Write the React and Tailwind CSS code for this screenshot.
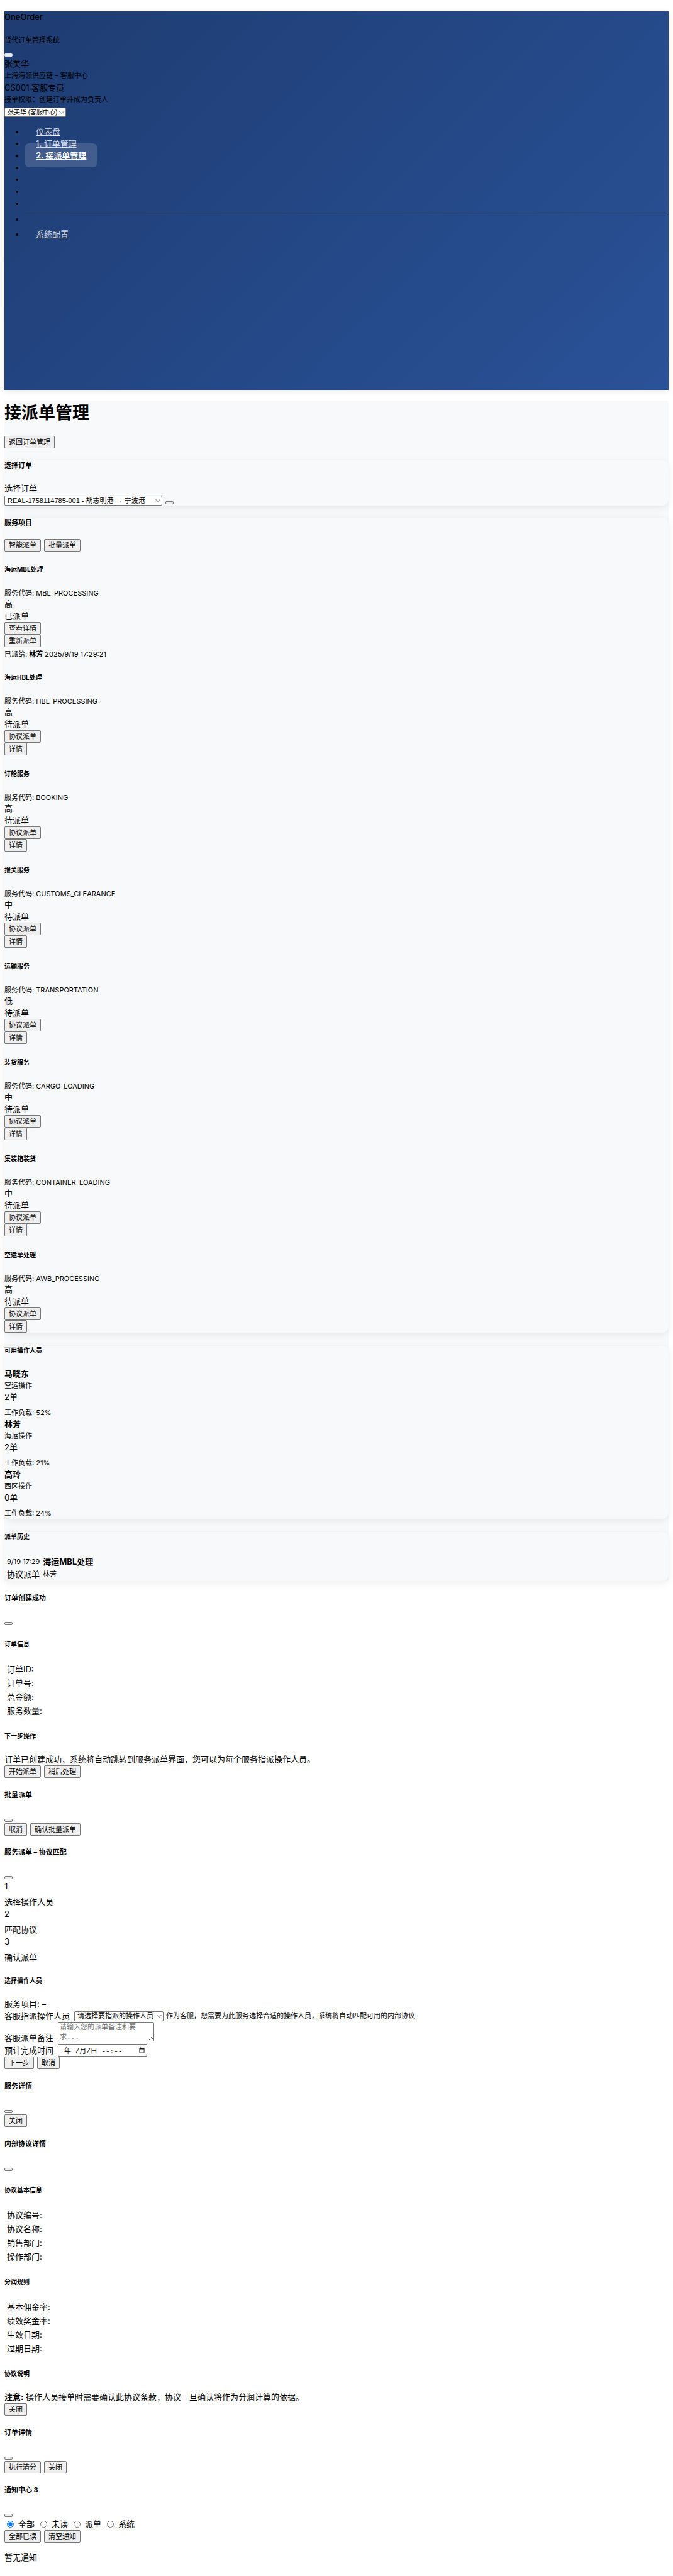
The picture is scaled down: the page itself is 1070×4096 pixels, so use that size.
import React from "react";

const buttonClass =
  "inline-flex h-[20px] items-center rounded-[2px] border border-[#767676] bg-[#efefef] px-[6px] text-[11px] leading-none text-black";

function Btn({ children }) {
  return (
    <button type="button" className={buttonClass}>
      {children}
    </button>
  );
}

function IconButton({ label, className = "" }) {
  return (
    <button
      type="button"
      aria-label={label}
      className={`block h-[5px] w-[13px] rounded-[2px] border border-[#767676] bg-[#efefef] ${className}`}
    />
  );
}

function Line({ children, className = "" }) {
  return <div className={`text-[13px] leading-[19px] ${className}`}>{children}</div>;
}

function H5({ children }) {
  return <h5 className="text-[11px] leading-[16px] font-bold">{children}</h5>;
}

function H6({ children, className = "" }) {
  return <h6 className={`text-[10px] leading-[14px] font-bold ${className}`}>{children}</h6>;
}

const selectClass =
  "appearance-none rounded-[2px] border border-[#767676] bg-white pl-[4px] pr-[12px] leading-[13px] font-['Liberation_Sans','Noto_Sans_CJK_SC',sans-serif] text-black";

function Select({ id, label, option, className }) {
  return (
    <span className="relative inline-flex">
      <select id={id} aria-label={label} className={`${selectClass} ${className}`}>
        <option>{option}</option>
      </select>
      <svg
        viewBox="0 0 8 6"
        className="pointer-events-none absolute top-[5px] right-[3px] h-[6px] w-[8px]"
        fill="none"
        stroke="#666"
        strokeWidth="1"
      >
        <path d="M0.5 1 L4 4.7 L7.5 1" />
      </svg>
    </span>
  );
}

const services = [
  { name: "海运MBL处理", code: "MBL_PROCESSING", level: "高", status: "已派单", actions: ["查看详情", "重新派单"], assigned: true },
  { name: "海运HBL处理", code: "HBL_PROCESSING", level: "高" },
  { name: "订舱服务", code: "BOOKING", level: "高" },
  { name: "报关服务", code: "CUSTOMS_CLEARANCE", level: "中" },
  { name: "运输服务", code: "TRANSPORTATION", level: "低" },
  { name: "装货服务", code: "CARGO_LOADING", level: "中" },
  { name: "集装箱装货", code: "CONTAINER_LOADING", level: "中" },
  { name: "空运单处理", code: "AWB_PROCESSING", level: "高" },
];

function Service({ name, code, level, status = "待派单", actions = ["协议派单", "详情"], assigned }) {
  return (
    <article>
      <H6>{name}</H6>
      <p className="mt-[23px] text-[11px] leading-[16px]">服务代码: {code}</p>
      <Line>{level}</Line>
      <Line>{status}</Line>
      <div className="flex flex-col items-start">
        {actions.map((a) => (
          <Btn key={a}>{a}</Btn>
        ))}
      </div>
      {assigned && (
        <p className="pt-[3px] text-[11px] leading-[16px]">
          已派给: <strong>林芳</strong> 2025/9/19 17:29:21
        </p>
      )}
    </article>
  );
}

const operators = [
  { name: "马晓东", dept: "空运操作", count: "2单", load: "52%" },
  { name: "林芳", dept: "海运操作", count: "2单", load: "21%" },
  { name: "高玲", dept: "西区操作", count: "0单", load: "24%" },
];

function Card({ children, className = "" }) {
  return (
    <section className={`rounded-[10px] bg-[#f8f9fb] shadow-[0_3px_13px_rgba(0,0,0,0.08)] ${className}`}>
      {children}
    </section>
  );
}

function FieldTable({ rows }) {
  return (
    <table className="mt-[22px] text-[13px]">
      <tbody>
        {rows.map((r) => (
          <tr key={r}>
            <th scope="row" className="h-[22px] p-0 pl-[4px] text-left leading-[19px] font-normal">
              {r}
            </th>
            <td className="p-0" />
          </tr>
        ))}
      </tbody>
    </table>
  );
}

function Modal({ title, children, className = "mt-[19px]" }) {
  return (
    <section className={className}>
      <H5>{title}</H5>
      <IconButton label="关闭" className="mt-[30px]" />
      {children}
    </section>
  );
}

const navLink = "px-[17px] py-[11px] text-white/80 underline";

export default function App() {
  return (
    <div className="bg-white px-[7px] pt-[18px] pb-[20px] font-[Inter,'Noto_Sans_CJK_SC',sans-serif] text-[13px] leading-[19px] text-black">
      <nav className="min-h-[602px] bg-linear-135 from-[#1e3c72] to-[#2a5298] shadow-[0_2px_9px_rgba(0,0,0,0.1)]">
        <h5 className="text-[13px] leading-[19px] font-medium">OneOrder</h5>
        <p className="mt-[18px] text-[11px] leading-[18px]">货代订单管理系统</p>
        <IconButton label="菜单" className="mt-[12px] border-[#ddd]" />
        <Line className="mt-[2px]">张美华</Line>
        <p className="text-[11px] leading-[19px]">上海海领供应链 – 客服中心</p>
        <Line>CS001 客服专员</Line>
        <p className="text-[11px] leading-[19px]">接单权限：创建订单并成为负责人</p>
        <div className="mt-[3px] flex">
          <Select
            id="user"
            label="当前用户"
            option="张美华 (客服中心)"
            className="h-[15px] w-[98px] text-[10px]"
          />
        </div>
        <ul className="mt-[14px] list-disc pl-[33px]">
          <li>
            <a href="#dashboard" className={navLink}>仪表盘</a>
          </li>
          <li>
            <a href="#orders" className={navLink}>1. 订单管理</a>
          </li>
          <li>
            <a href="#dispatch" className="rounded-[6px] bg-white/15 px-[17px] py-[11px] font-semibold text-white underline">
              2. 接派单管理
            </a>
          </li>
          <li className="h-[19px]" />
          <li className="h-[19px]" />
          <li className="h-[19px]" />
          <li className="h-[19px]" />
          <li className="mt-[5px] h-[20px] border-t border-white/40" />
          <li className="mt-[5px]">
            <a href="#settings" className={navLink}>系统配置</a>
          </li>
        </ul>
      </nav>

      <main className="mt-[17px] bg-[#f8f9fb]">
        <h1 className="text-[27px] leading-[39px] font-bold">接派单管理</h1>
        <div className="mt-[17px] flex">
          <Btn>返回订单管理</Btn>
        </div>

        <Card className="mt-[19px]">
          <H5>选择订单</H5>
          <label htmlFor="order" className="mt-[19px] block">选择订单</label>
          <div className="mt-[2px] flex items-end gap-[5px]">
            <Select
              id="order"
              label="选择订单"
              option="REAL-1758114785-001 - 胡志明港 → 宁波港"
              className="h-[16px] w-[251px] text-[11px]"
            />
            <IconButton label="刷新" className="mb-[2px]" />
          </div>
        </Card>

        <Card className="mt-[19px]">
          <H5>服务项目</H5>
          <div className="mt-[18px] flex gap-[5px]">
            <Btn>智能派单</Btn>
            <Btn>批量派单</Btn>
          </div>
          <div className="mt-[21px] flex flex-col gap-[22px]">
            {services.map((s) => (
              <Service key={s.code} {...s} />
            ))}
          </div>
        </Card>

        <Card className="mt-[21px]">
          <H6>可用操作人员</H6>
          <div className="mt-[21px]">
            {operators.map((o) => (
              <div key={o.name}>
                <Line className="font-bold">{o.name}</Line>
                <p className="text-[11px] leading-[18px]">{o.dept}</p>
                <Line>{o.count}</Line>
                <p className="mt-[7px] text-[11px] leading-[17px]">工作负载: {o.load}</p>
              </div>
            ))}
          </div>
        </Card>

        <Card className="mt-[21px] pb-[1px]">
          <H6>派单历史</H6>
          <div className="mt-[23px] grid grid-cols-[auto_1fr] gap-x-[5px] pl-[4px] leading-[20px]">
            <span className="text-[11px]">9/19 17:29</span>
            <strong>海运MBL处理</strong>
            <span className="col-span-2 flex gap-[5px]">
              协议派单 <span className="text-[11px]">林芳</span>
            </span>
          </div>
        </Card>
      </main>

      <Modal title="订单创建成功">
        <H6 className="mt-[23px]">订单信息</H6>
        <FieldTable rows={["订单ID:", "订单号:", "总金额:", "服务数量:"]} />
        <H6 className="mt-[22px]">下一步操作</H6>
        <Line className="mt-[21px]">
          订单已创建成功，系统将自动跳转到服务派单界面，您可以为每个服务指派操作人员。
        </Line>
        <div className="flex gap-[5px]">
          <Btn>开始派单</Btn>
          <Btn>稍后处理</Btn>
        </div>
      </Modal>

      <Modal title="批量派单">
        <div className="mt-[2px] flex gap-[5px]">
          <Btn>取消</Btn>
          <Btn>确认批量派单</Btn>
        </div>
      </Modal>

      <Modal title="服务派单 – 协议匹配" className="mt-[18px]">
        <div className="mt-[2px]">
          {["选择操作人员", "匹配协议", "确认派单"].map((step, i) => (
            <div key={step}>
              <Line>{i + 1}</Line>
              <Line className="mt-[6px]">{step}</Line>
            </div>
          ))}
        </div>
        <H6 className="mt-[20px]">选择操作人员</H6>
        <Line className="mt-[21px]">
          服务项目: <strong>–</strong>
        </Line>
        <div className="flex h-[19px] items-center">
          <label htmlFor="operator">客服指派操作人员</label>
          <span className="ml-[7px] flex">
            <Select
              id="operator"
              label="客服指派操作人员"
              option="请选择要指派的操作人员"
              className="h-[16px] w-[142px] text-[11px]"
            />
          </span>
          <small className="ml-[4px] text-[11px]">
            作为客服，您需要为此服务选择合适的操作人员，系统将自动匹配可用的内部协议
          </small>
        </div>
        <div className="flex items-end gap-[7px]">
          <label htmlFor="remark">客服派单备注</label>
          <textarea
            id="remark"
            placeholder="请输入您的派单备注和要求..."
            className="mb-[4px] h-[31px] w-[153px] resize overflow-hidden rounded-[2px] border border-[#767676] bg-white pt-[1px] pr-[20px] pl-[2px] font-['Liberation_Mono','Noto_Sans_CJK_SC',monospace] text-[11px] leading-[15px] placeholder:text-[#757575]"
          />
        </div>
        <div className="flex items-center gap-[7px]">
          <label htmlFor="finish">预计完成时间</label>
          <span className="relative flex">
            <input
              id="finish"
              type="text"
              defaultValue="年 /月/日 --:--"
              className="h-[20px] w-[142px] rounded-[2px] border border-[#767676] bg-white pl-[9px] font-['Liberation_Mono','Noto_Sans_CJK_SC',monospace] text-[11px]"
            />
            <svg viewBox="0 0 10 11" className="absolute top-[5px] right-[4px] h-[10px] w-[9px]" fill="none" stroke="#111">
              <rect x="1" y="2" width="8" height="8" rx="0.6" />
              <path d="M1 3h8M2.8 0.5v2M7.2 0.5v2" strokeWidth="1.4" />
            </svg>
          </span>
        </div>
        <div className="flex gap-[5px]">
          <Btn>下一步</Btn>
          <Btn>取消</Btn>
        </div>
      </Modal>

      <Modal title="服务详情">
        <div className="mt-[2px] flex">
          <Btn>关闭</Btn>
        </div>
      </Modal>

      <Modal title="内部协议详情">
        <H6 className="mt-[23px]">协议基本信息</H6>
        <FieldTable rows={["协议编号:", "协议名称:", "销售部门:", "操作部门:"]} />
        <H6 className="mt-[22px]">分润规则</H6>
        <FieldTable rows={["基本佣金率:", "绩效奖金率:", "生效日期:", "过期日期:"]} />
        <H6 className="mt-[22px]">协议说明</H6>
        <Line className="mt-[21px]">
          <strong>注意:</strong> 操作人员接单时需要确认此协议条款，协议一旦确认将作为分润计算的依据。
        </Line>
        <div className="flex">
          <Btn>关闭</Btn>
        </div>
      </Modal>

      <Modal title="订单详情">
        <div className="mt-[2px] flex gap-[5px]">
          <Btn>执行清分</Btn>
          <Btn>关闭</Btn>
        </div>
      </Modal>

      <Modal title="通知中心 3" className="mt-[18px]">
        <div className="mt-[2px] flex gap-[9px] pl-[4px]">
          {["全部", "未读", "派单", "系统"].map((f, i) => (
            <label key={f} className="flex items-center gap-[7px]">
              <input type="radio" name="filter" defaultChecked={i === 0} className="size-[11px] accent-[#0075ff]" />
              {f}
            </label>
          ))}
        </div>
        <div className="flex gap-[5px]">
          <Btn>全部已读</Btn>
          <Btn>清空通知</Btn>
        </div>
        <Line className="mt-[14px]">暂无通知</Line>
      </Modal>
    </div>
  );
}
